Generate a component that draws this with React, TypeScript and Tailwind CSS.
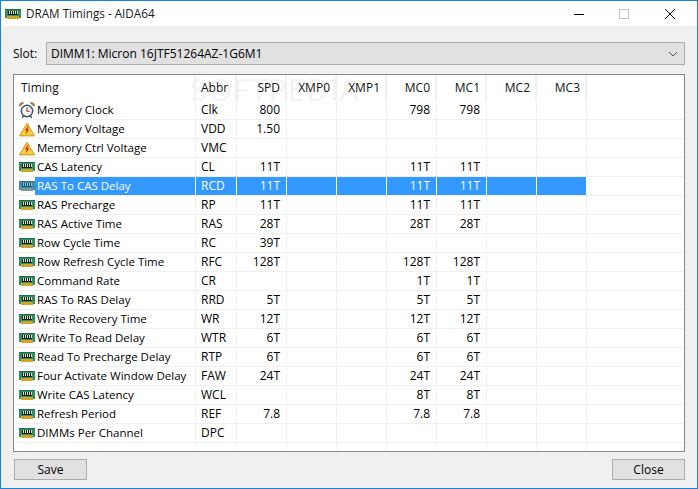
const font = "font-['Open_Sans','Noto_Sans',sans-serif]";

type Row = { name: string; abbr: string; spd?: string; mc0?: string; mc1?: string; icon?: "clock" | "warn" };

const rows: Row[] = [
  { name: "Memory Clock", abbr: "Clk", spd: "800", mc0: "798", mc1: "798", icon: "clock" },
  { name: "Memory Voltage", abbr: "VDD", spd: "1.50", icon: "warn" },
  { name: "Memory Ctrl Voltage", abbr: "VMC", icon: "warn" },
  { name: "CAS Latency", abbr: "CL", spd: "11T", mc0: "11T", mc1: "11T" },
  { name: "RAS To CAS Delay", abbr: "RCD", spd: "11T", mc0: "11T", mc1: "11T" },
  { name: "RAS Precharge", abbr: "RP", spd: "11T", mc0: "11T", mc1: "11T" },
  { name: "RAS Active Time", abbr: "RAS", spd: "28T", mc0: "28T", mc1: "28T" },
  { name: "Row Cycle Time", abbr: "RC", spd: "39T" },
  { name: "Row Refresh Cycle Time", abbr: "RFC", spd: "128T", mc0: "128T", mc1: "128T" },
  { name: "Command Rate", abbr: "CR", mc0: "1T", mc1: "1T" },
  { name: "RAS To RAS Delay", abbr: "RRD", spd: "5T", mc0: "5T", mc1: "5T" },
  { name: "Write Recovery Time", abbr: "WR", spd: "12T", mc0: "12T", mc1: "12T" },
  { name: "Write To Read Delay", abbr: "WTR", spd: "6T", mc0: "6T", mc1: "6T" },
  { name: "Read To Precharge Delay", abbr: "RTP", spd: "6T", mc0: "6T", mc1: "6T" },
  { name: "Four Activate Window Delay", abbr: "FAW", spd: "24T", mc0: "24T", mc1: "24T" },
  { name: "Write CAS Latency", abbr: "WCL", mc0: "8T", mc1: "8T" },
  { name: "Refresh Period", abbr: "REF", spd: "7.8", mc0: "7.8", mc1: "7.8" },
  { name: "DIMMs Per Channel", abbr: "DPC" },
];

function RamIcon({ selected = false }: { selected?: boolean }) {
  const body = selected ? "#3f8fa8" : "#2f8f63";
  const dark = selected ? "#2c6f8c" : "#1f6e49";
  const slot = selected ? "#27506b" : "#1a1f1c";
  const pins = selected ? "#8fc0dc" : "#d6e2d6";
  const gold = selected ? "#7f9f98" : "#e0ad2a";
  return (
    <svg width="16" height="10" viewBox="0 0 16 10">
      <rect x="0" y="0" width="16" height="9" fill={body} />
      <rect x="0" y="0" width="16" height="1" fill={dark} />
      <rect x="3" y="2" width="10" height="4" fill={slot} />
      <path d="M4.5 2v3M6.5 2v3M8.5 2v3M10.5 2v3M12.5 2v3" stroke={pins} strokeWidth="1" />
      <rect x="2" y="7" width="12" height="3" fill={gold} />
      <path d="M4 7v3M7 7v3M10 7v3M13 7v3" stroke={selected ? "#5f8580" : "#a87f14"} strokeWidth="0.6" />
    </svg>
  );
}

function ClockIcon() {
  return (
    <svg width="16" height="17" viewBox="0 0 16 17">
      <path d="M0.8 4.2A2.6 2.6 0 0 1 4.6 1Z" fill="#c2963f" stroke="#6e5a2c" strokeWidth="0.7" />
      <path d="M15.2 4.2A2.6 2.6 0 0 0 11.4 1Z" fill="#c2963f" stroke="#6e5a2c" strokeWidth="0.7" />
      <path d="M3.2 15.8l1.6-2.2M12.8 15.8l-1.6-2.2" stroke="#3f4a52" strokeWidth="1.3" />
      <circle cx="8" cy="9" r="5.7" fill="#f4f8fa" stroke="#3d5566" strokeWidth="1.5" />
      <path d="M8 5.6v3.6h2.8" fill="none" stroke="#b02a20" strokeWidth="1.1" />
    </svg>
  );
}

function WarnIcon() {
  return (
    <svg width="17" height="15" viewBox="0 0 17 15">
      <path d="M8.5 0.8L16.5 14.3H0.5Z" fill="#fbcf3a" stroke="#c2941c" strokeWidth="1" strokeLinejoin="round" />
      <path d="M9.8 3.2L6.2 8.6h2.1l-1.2 4.2 3.8-5.6H8.8l1.7-4Z" fill="#d4281c" />
    </svg>
  );
}

function Cell({ children, selected }: { children?: string; selected: boolean }) {
  return (
    <div className={`flex w-[50px] items-center justify-end border-r pr-[6px] ${selected ? "border-white" : "border-[#f0f0f0]"}`}>
      {children}
    </div>
  );
}

export default function App() {
  return (
    <div className={`${font} flex h-[489px] w-[698px] flex-col overflow-hidden border border-[#1883d7] bg-[#f0f0f0] text-[12px] text-black`}>
      {/* title bar */}
      <div className="flex h-[25px] shrink-0 items-center bg-white pl-[4px]">
        <RamIcon />
        <span className="ml-[5px] text-[11.7px] text-[#1a1a1a]">DRAM Timings - AIDA64</span>
        <div className="ml-auto flex items-center pr-[5px]">
          <svg width="120" height="12" viewBox="0 0 120 12">
            <path d="M2 6.5h10" stroke="#000" strokeWidth="1" />
            <rect x="47.5" y="1.5" width="9" height="9" fill="none" stroke="#c4c4c4" />
            <path d="M93 1l10 10M103 1L93 11" stroke="#000" strokeWidth="1" />
          </svg>
        </div>
      </div>

      <div className="flex min-h-0 flex-1 flex-col px-[12px] pb-[8px] pt-[16px]">
        {/* slot select */}
        <div className="flex h-[23px] items-center">
          <span className="w-[33px]">Slot:</span>
          <div className="flex h-[23px] flex-1 items-center justify-between border border-[#adadad] bg-[#e1e1e1] pl-[4px] pr-[6px]">
            <span>DIMM1: Micron 16JTF51264AZ-1G6M1</span>
            <svg width="10" height="6" viewBox="0 0 10 6">
              <path d="M1 1l4 4 4-4" fill="none" stroke="#555" strokeWidth="1" />
            </svg>
          </div>
        </div>

        {/* timings list */}
        <div className="relative mt-[9px] flex h-[378px] flex-col overflow-hidden border border-[#828790] bg-white pl-[1px]">
          <span className="pointer-events-none absolute left-[176px] top-[-1px] text-[31px] leading-none tracking-[1px] text-[#f3f3f3]">
            SOFTPEDIA
          </span>
          <div className="relative flex h-[26px] shrink-0 pb-[1px] text-[#111]">
            <div className="flex w-[181px] items-center border-r-2 border-[#f0f0f0] pl-[6px]">Timing</div>
            <div className="flex w-[41px] items-center border-r-2 border-[#f0f0f0] pl-[5px]">Abbr</div>
            {["SPD", "XMP0", "XMP1", "MC0", "MC1", "MC2", "MC3"].map((h) => (
              <div key={h} className="flex w-[50px] items-center justify-end border-r-2 border-[#f0f0f0] pr-[5px]">
                {h}
              </div>
            ))}
          </div>

          {rows.map((r, i) => {
            const selected = i === 4;
            return (
              <div key={r.name} className="flex h-[19px] shrink-0 border-b border-[#f0f0f0] pr-[3px]">
                <div className={`flex w-[181px] items-center border-r pl-[4px] ${selected ? "border-white" : "border-[#f0f0f0]"}`}>
                  <span className="flex w-[16px] justify-center">
                    {r.icon === "clock" ? <ClockIcon /> : r.icon === "warn" ? <WarnIcon /> : <RamIcon selected={selected} />}
                  </span>
                  <span className={`flex h-full flex-1 items-center pl-[2px] text-[11.5px] ${selected ? "bg-[#3399ff] text-white" : ""}`}>{r.name}</span>
                </div>
                <div className={`flex w-[41px] items-center border-r pl-[5px] ${selected ? "border-white bg-[#3399ff] text-white" : "border-[#f0f0f0]"}`}>{r.abbr}</div>
                <div className={`flex ${selected ? "bg-[#3399ff] text-white" : ""}`}>
                  {[r.spd, undefined, undefined, r.mc0, r.mc1, undefined, undefined].map((v, j) => (
                    <Cell key={j} selected={selected}>
                      {v}
                    </Cell>
                  ))}
                </div>
              </div>
            );
          })}
          <div className="flex flex-1">
            <div className="w-[181px] border-r border-[#f0f0f0]" />
            <div className="w-[41px] border-r border-[#f0f0f0]" />
            {[0, 1, 2, 3, 4, 5, 6].map((k) => (
              <div key={k} className="w-[50px] border-r border-[#f0f0f0]" />
            ))}
          </div>
        </div>

        {/* buttons */}
        <div className="mt-[7px] flex justify-between pl-[1px]">
          <button className="h-[21px] w-[73px] border border-[#adadad] bg-[#e1e1e1]">Save</button>
          <button className="h-[21px] w-[73px] border border-[#adadad] bg-[#e1e1e1]">Close</button>
        </div>
      </div>
    </div>
  );
}
